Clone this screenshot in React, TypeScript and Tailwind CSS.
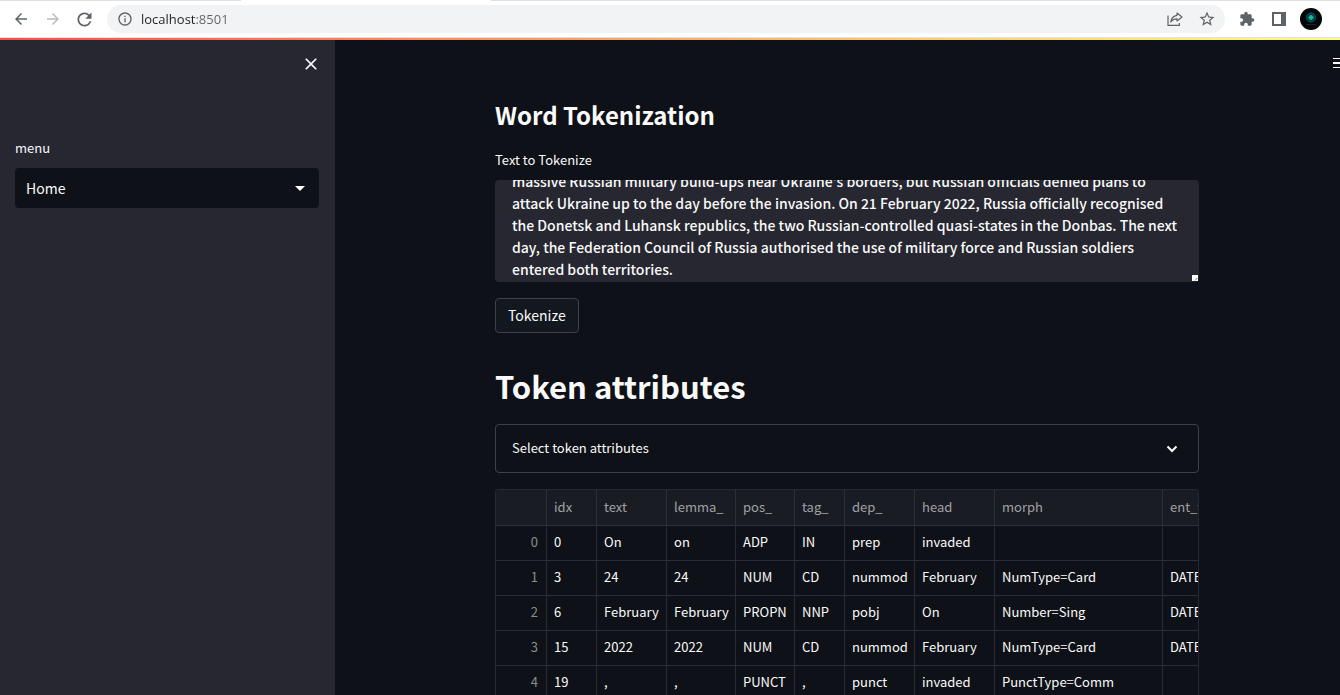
import { useLayoutEffect, useRef } from "react";
import {
  MdArrowBack,
  MdArrowForward,
  MdRefresh,
  MdInfoOutline,
  MdStarOutline,
  MdExtension,
  MdClose,
  MdArrowDropDown,
} from "react-icons/md";

const passage = [
  "massive Russian military build-ups near Ukraine's borders, but Russian officials denied plans to",
  "attack Ukraine up to the day before the invasion. On 21 February 2022, Russia officially recognised",
  "the Donetsk and Luhansk republics, the two Russian-controlled quasi-states in the Donbas. The next",
  "day, the Federation Council of Russia authorised the use of military force and Russian soldiers",
  "entered both territories.",
].join("\n");

const columns = [
  { name: "idx", width: "w-[50px]" },
  { name: "text", width: "w-[70px]" },
  { name: "lemma_", width: "w-[69px]" },
  { name: "pos_", width: "w-[59px]" },
  { name: "tag_", width: "w-[50px]" },
  { name: "dep_", width: "w-[70px]" },
  { name: "head", width: "w-[80px]" },
  { name: "morph", width: "w-[168px]" },
  { name: "ent_type_", width: "w-[80px]" },
];

const rows = [
  ["0", "On", "on", "ADP", "IN", "prep", "invaded", "", ""],
  ["3", "24", "24", "NUM", "CD", "nummod", "February", "NumType=Card", "DATE"],
  ["6", "February", "February", "PROPN", "NNP", "pobj", "On", "Number=Sing", "DATE"],
  ["15", "2022", "2022", "NUM", "CD", "nummod", "February", "NumType=Card", "DATE"],
  ["19", ",", ",", "PUNCT", ",", "punct", "invaded", "PunctType=Comm", ""],
];

function BrowserBar() {
  return (
    <header className="flex h-[38px] shrink-0 flex-col border-b border-[#dfe1e5] bg-white text-[#5f6368]">
      <div className="flex h-px shrink-0">
        <div className="w-[241px] bg-[#dee1e6]" />
        <div className="w-[250px]" />
        <div className="flex-1 bg-[#dee1e6]" />
      </div>
      <div className="flex flex-1 items-center pr-[18px] pl-3">
        <button aria-label="Back" className="mr-3.5">
          <MdArrowBack size={18} />
        </button>
        <button aria-label="Forward" className="mr-3 text-[#babcbe]">
          <MdArrowForward size={18} />
        </button>
        <button aria-label="Reload" className="mr-3">
          <MdRefresh size={21} />
        </button>
        <div className="flex h-7 flex-1 items-center rounded-full bg-[#f1f3f4] pr-[9px] pl-2.5">
          <MdInfoOutline size={16} />
          <input
            aria-label="Address"
            defaultValue="localhost:8501"
            className="ml-2 min-w-0 flex-1 bg-[linear-gradient(to_right,#202124_55px,#5f6368_55px)] bg-clip-text font-['Open_Sans',sans-serif] text-[13px] leading-5 text-transparent outline-none"
          />
          <button aria-label="Share" className="mr-[15px]">
            <svg width="16" height="16" viewBox="0 0 16 16" fill="none" stroke="currentColor" strokeWidth="1.2">
              <path d="M1 4.500V14.400H12.400V12" />
              <path d="M10 2L15 6L10 10V7.800C7 7.800 5.200 8.800 3.800 11C4.200 7.500 6.200 4.800 10 4.300Z" strokeLinejoin="round" />
            </svg>
          </button>
          <button aria-label="Bookmark">
            <MdStarOutline size={18} />
          </button>
        </div>
        <button aria-label="Extensions" className="ml-3.5">
          <MdExtension size={16} />
        </button>
        <button aria-label="Side panel" className="ml-[17px]">
          <svg width="14" height="14" viewBox="0 0 14 14">
            <path fill="currentColor" fillRule="evenodd" d="M0 0H14V14H0ZM2 2V12H9V2Z" />
          </svg>
        </button>
        <button aria-label="Profile" className="ml-3.5">
          <svg width="22" height="22" viewBox="0 0 22 22">
            <circle cx="11" cy="11" r="11" fill="#020607" />
            <circle cx="11" cy="9.500" r="4.500" fill="#03303f" stroke="#0a5a7c" />
            <circle cx="11" cy="9.500" r="2.500" fill="#08a070" />
            <path d="M8.500 9.500H13.500M11 7V12" stroke="#14c890" />
            <path d="M6 16.500H16" stroke="#05301c" />
          </svg>
        </button>
      </div>
    </header>
  );
}

function Sidebar() {
  return (
    <aside className="w-[335px] shrink-0 bg-[#262730]">
      <div className="flex justify-end pt-3.5 pr-[14px]">
        <button aria-label="Close sidebar">
          <MdClose size={20} />
        </button>
      </div>
      <div className="px-[15px] pr-4 pt-16">
        <label htmlFor="menu" className="block text-[13px] leading-5">
          menu
        </label>
        <div className="relative mt-2.5">
          <select
            id="menu"
            className="h-10 w-full appearance-none rounded bg-[#0e1117] px-[11px] text-[14px] outline-none"
          >
            <option>Home</option>
          </select>
          <MdArrowDropDown size={24} className="pointer-events-none absolute top-2 right-[7px]" />
        </div>
      </div>
    </aside>
  );
}

function TokenTable() {
  return (
    <div className="mt-4 overflow-hidden rounded-t border border-b-0 border-[#272a30]">
      <table className="w-[747px] table-fixed border-separate border-spacing-0 text-left text-[13px] leading-5">
        <thead>
          <tr className="h-9 bg-[#1a1c23] text-[#a0a1a5]">
            <th className="w-[51px] border-r border-b border-[#2c2f35]" aria-label="row" />
            {columns.map((column) => (
              <th
                key={column.name}
                className={`${column.width} border-r border-b border-[#2c2f35] p-0 pb-0.5 pl-[7px] font-normal`}
              >
                {column.name}
              </th>
            ))}
          </tr>
        </thead>
        <tbody>
          {rows.map((row, index) => (
            <tr key={row[0]} className="h-[35px]">
              <th className="border-r border-b border-[#2a2d33] p-0 pr-2 pb-0.5 text-right font-normal text-[#8b8d91]">
                {index}
              </th>
              {row.map((value, cell) => (
                <td key={columns[cell].name} className="border-r border-b border-[#2a2d33] p-0 pb-0.5 pl-[7px]">
                  {value}
                </td>
              ))}
            </tr>
          ))}
        </tbody>
      </table>
    </div>
  );
}

export default function App() {
  const textRef = useRef<HTMLTextAreaElement>(null);

  useLayoutEffect(() => {
    if (textRef.current) textRef.current.scrollTop = textRef.current.scrollHeight;
  }, []);

  return (
    <div className="flex h-screen flex-col overflow-hidden bg-[#0e1117] font-['Noto_Sans_CJK_SC',sans-serif] text-[#fafafa]">
      <BrowserBar />
      <div className="h-0.5 shrink-0 bg-linear-to-r from-[#ff4b4b] to-[#fffd80]" />
      <div className="flex min-h-0 flex-1">
        <Sidebar />
        <main className="relative -mr-[19px] min-w-0 flex-1">
          <button aria-label="Main menu" className="absolute top-[18px] right-4">
            <svg width="10" height="10" viewBox="0 0 10 10" fill="currentColor">
              <path d="M0 0H10V1H0ZM0 4H10V6H0ZM0 9H10V10H0Z" />
            </svg>
          </button>
          <div className="mx-auto max-w-[704px] pt-[57px]">
            <h2 className="text-[24px] leading-9 font-semibold">Word Tokenization</h2>
            <label htmlFor="source" className="mt-[17px] block text-[13px] leading-5">
              Text to Tokenize
            </label>
            <div className="relative mt-2.5">
              <textarea
                id="source"
                ref={textRef}
                defaultValue={passage}
                className="block h-[102px] w-full resize-none overflow-y-scroll rounded bg-[#262730] px-[17px] pb-0.5 text-[14px] leading-[22px] font-medium whitespace-pre outline-none [scrollbar-width:none]"
              />
              <svg width="6" height="6" viewBox="0 0 6 6" className="absolute right-px bottom-px">
                <path fill="#fff" d="M0 0H6V6H0Z" />
                <path stroke="#777" d="M3 5.500L5.500 3" />
              </svg>
            </div>
            <button className="mt-4 flex h-[35px] items-center rounded border border-[#3e4147] bg-[#131720] px-3 text-[14px]">
              Tokenize
            </button>
            <h1 className="mt-[27px] text-[31px] leading-[52px] font-bold">Token attributes</h1>
            <button className="mt-3 flex h-[49px] w-full items-center justify-between rounded border border-[#3e4147] px-4 pb-0.5 text-[13px]">
              Select token attributes
              <svg width="20" height="20" viewBox="0 0 20 20" fill="none" stroke="currentColor" strokeWidth="2">
                <path d="M5.500 8.500L10 13L14.500 8.500" />
              </svg>
            </button>
            <TokenTable />
          </div>
        </main>
      </div>
    </div>
  );
}
